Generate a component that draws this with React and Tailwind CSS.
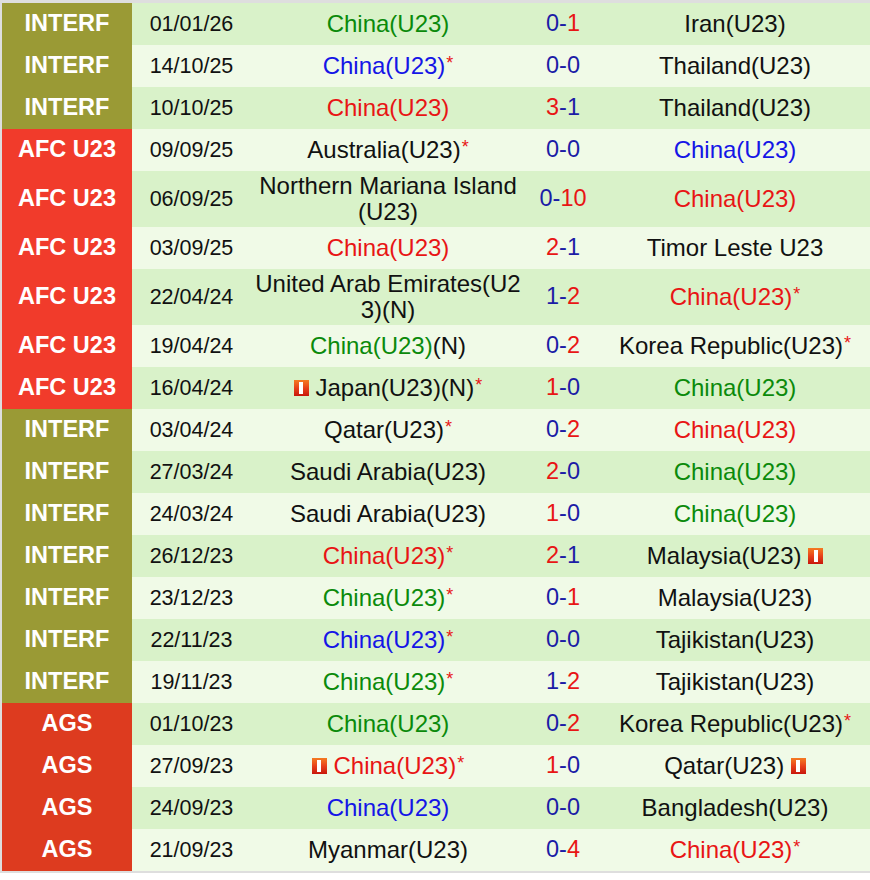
import React from 'react';

const CAT = {
  INTERF: 'bg-[#9a9a35]',
  'AFC U23': 'bg-[#f13b2b]',
  AGS: 'bg-[#dd3b1f]',
};

const TEAM_COLOR = {
  g: 'text-[#0b8a0b]',
  r: 'text-[#e81515]',
  b: 'text-[#1515e6]',
  k: 'text-[#111]',
};

// [category, date, home, score, away]
const rows = [
  ['INTERF', '01/01/26', { n: 'China(U23)', c: 'g' }, '0-1', { n: 'Iran(U23)' }],
  ['INTERF', '14/10/25', { n: 'China(U23)', c: 'b', star: true }, '0-0', { n: 'Thailand(U23)' }],
  ['INTERF', '10/10/25', { n: 'China(U23)', c: 'r' }, '3-1', { n: 'Thailand(U23)' }],
  ['AFC U23', '09/09/25', { n: 'Australia(U23)', star: true }, '0-0', { n: 'China(U23)', c: 'b' }],
  ['AFC U23', '06/09/25', { n: 'Northern Mariana Island(U23)' }, '0-10', { n: 'China(U23)', c: 'r' }],
  ['AFC U23', '03/09/25', { n: 'China(U23)', c: 'r' }, '2-1', { n: 'Timor Leste U23' }],
  ['AFC U23', '22/04/24', { n: 'United Arab Emirates(U23)(N)' }, '1-2', { n: 'China(U23)', c: 'r', star: true }],
  ['AFC U23', '19/04/24', { n: 'China(U23)', c: 'g', tail: '(N)' }, '0-2', { n: 'Korea Republic(U23)', star: true }],
  ['AFC U23', '16/04/24', { n: 'Japan(U23)(N)', star: true, cardBefore: true }, '1-0', { n: 'China(U23)', c: 'g' }],
  ['INTERF', '03/04/24', { n: 'Qatar(U23)', star: true }, '0-2', { n: 'China(U23)', c: 'r' }],
  ['INTERF', '27/03/24', { n: 'Saudi Arabia(U23)' }, '2-0', { n: 'China(U23)', c: 'g' }],
  ['INTERF', '24/03/24', { n: 'Saudi Arabia(U23)' }, '1-0', { n: 'China(U23)', c: 'g' }],
  ['INTERF', '26/12/23', { n: 'China(U23)', c: 'r', star: true }, '2-1', { n: 'Malaysia(U23)', cardAfter: true }],
  ['INTERF', '23/12/23', { n: 'China(U23)', c: 'g', star: true }, '0-1', { n: 'Malaysia(U23)' }],
  ['INTERF', '22/11/23', { n: 'China(U23)', c: 'b', star: true }, '0-0', { n: 'Tajikistan(U23)' }],
  ['INTERF', '19/11/23', { n: 'China(U23)', c: 'g', star: true }, '1-2', { n: 'Tajikistan(U23)' }],
  ['AGS', '01/10/23', { n: 'China(U23)', c: 'g' }, '0-2', { n: 'Korea Republic(U23)', star: true }],
  ['AGS', '27/09/23', { n: 'China(U23)', c: 'r', star: true, cardBefore: true }, '1-0', { n: 'Qatar(U23)', cardAfter: true }],
  ['AGS', '24/09/23', { n: 'China(U23)', c: 'b' }, '0-0', { n: 'Bangladesh(U23)' }],
  ['AGS', '21/09/23', { n: 'Myanmar(U23)' }, '0-4', { n: 'China(U23)', c: 'r', star: true }],
];

// red card badge
const RedCard = () => (
  <span className="inline-block w-[15px] h-[16px] align-baseline bg-gradient-to-b from-[#f47a22] via-[#e8401a] to-[#c8140c]">
    <span className="block w-[4px] h-[12px] mx-auto mt-[2px] bg-white" />
  </span>
);

const Team = ({ t }) => (
  <span className={TEAM_COLOR[t.c || 'k']}>
    {t.cardBefore && (
      <>
        <RedCard />{' '}
      </>
    )}
    {t.n}
    {t.tail && <span className="text-[#111]">{t.tail}</span>}
    {t.star && <sup className="text-[#e81515] text-[18px] top-[-5px] ml-[1px]">*</sup>}
    {t.cardAfter && (
      <>
        {' '}
        <RedCard />
      </>
    )}
  </span>
);

const Score = ({ s }) => {
  const [a, b] = s.split('-');
  const x = parseInt(a, 10);
  const y = parseInt(b, 10);
  const red = 'text-[#e81515]';
  const blue = 'text-[#1c1ca6]';
  return (
    <span className={blue}>
      <span className={x > y ? red : blue}>{a}</span>-
      <span className={y > x ? red : blue}>{b}</span>
    </span>
  );
};

export default function App() {
  return (
    <div
      className="w-[870px] bg-white"
      style={{ fontFamily: '"Liberation Sans", Arial, sans-serif' }}
    >
      <div className="bg-[#dedede] pt-[3px] pl-[2px] pb-[2px]">
        {rows.map(([cat, date, home, score, away], i) => {
          const bg = i % 2 === 0 ? 'bg-[#d9f2c9]' : 'bg-[#f0fae7]';
          return (
            <div key={i} className="grid grid-cols-[130px_118px_276px_74px_1fr]">
              <div
                className={`${CAT[cat]} text-white font-bold text-[23.5px] flex items-center justify-center min-h-[42px]`}
              >
                {cat}
              </div>
              <div className={`${bg} flex items-center justify-center text-[21.5px] text-[#111] pl-[1px]`}>
                {date}
              </div>
              <div
                className={`${bg} flex items-center justify-center text-center text-[24px] leading-[26px] px-[4px] py-[2px] break-all`}
              >
                <Team t={home} />
              </div>
              <div className={`${bg} flex items-center justify-center text-[23.5px]`}>
                <Score s={score} />
              </div>
              <div className={`${bg} flex items-center justify-center text-center text-[24px] leading-[26px] px-[2px]`}>
                <Team t={away} />
              </div>
            </div>
          );
        })}
      </div>
    </div>
  );
}
